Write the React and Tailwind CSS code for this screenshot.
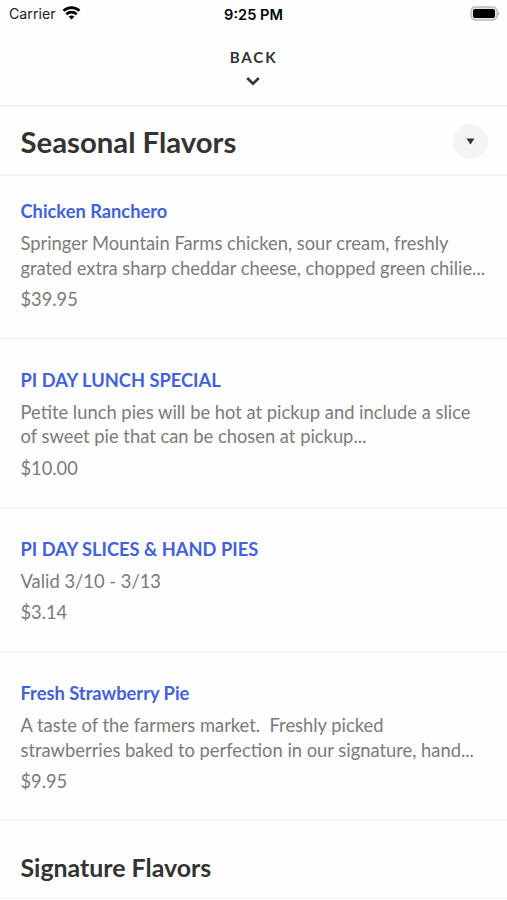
const seasonal = [
    {
        name : "Chicken Ranchero",
        lines : ["Springer Mountain Farms chicken, sour cream, freshly", "grated extra sharp cheddar cheese, chopped green chilie..."],
        price : "$39.95",
    },
    {
        name : "PI DAY LUNCH SPECIAL",
        lines : ["Petite lunch pies will be hot at pickup and include a slice", "of sweet pie that can be chosen at pickup..."],
        price : "$10.00",
    },
    {
        name : "PI DAY SLICES & HAND PIES",
        lines : ["Valid 3/10 - 3/13"],
        price : "$3.14",
    },
    {
        name : "Fresh Strawberry Pie",
        lines : ["A taste of the farmers market.  Freshly picked", "strawberries baked to perfection in our signature, hand..."],
        price : "$9.95",
    },
];

const StatusBar = () => {
    return(
        <div className="h-7 pl-[9px] pr-[7px] grid grid-cols-3 items-center font-['Inter',sans-serif] text-black">
            <div className="flex items-center gap-[6px] text-[14.2px]">
                <span className="text-[#222]">Carrier</span>
                <svg className="-mt-[2px]" width="19" height="14" viewBox="0 0 18 14" fill="none" stroke="#000" strokeWidth="2.6">
                    <path d="M1 4.8C5.5.6 12.5.6 17 4.8" />
                    <path d="M3.8 8.2C6.8 5.4 11.2 5.4 14.2 8.2" />
                    <path d="M6.2 10.7C7.8 9.2 10.2 9.2 11.8 10.7L9 13.6Z" fill="#000" stroke="none" />
                </svg>
            </div>
            <span className="pt-px pr-[2px] text-center text-[14.6px] leading-[22px] font-semibold whitespace-nowrap">9:25 PM</span>
            <svg className="justify-self-end -mt-[2px]" width="30" height="15" viewBox="0 0 30 15">
                <rect x="1" y="1" width="26" height="13" rx="4" fill="#e4e4e4" stroke="#bdbdbd" strokeWidth="1.4" />
                <rect x="3" y="3" width="22" height="9" rx="2" fill="#000" />
                <path d="M28 5C29.8 5.8 29.8 9.2 28 10Z" fill="#bdbdbd" />
            </svg>
        </div>
    )
}

const MenuItem = ({ item }) => {
    return(
        <li className="pl-[20.5px] pt-[27.9px] first:pt-[22px] pb-[26px] border-b border-[#f1f1f1]">
            <h3 className="text-[18.3px] leading-[26px] font-bold text-[#4361da]">{item.name}</h3>
            <div className="mt-[7px] text-[18.35px] leading-[24.5px] text-[#7b7b7b]">
                {item.lines.map((line) => (
                    <p key={line} className="whitespace-pre">{line}</p>
                ))}
            </div>
            <p className="mt-[7px] text-[18.3px] leading-[25px] text-[#7b7b7b]">{item.price}</p>
        </li>
    )
}

const App = () => {
    return(
        <div className="w-full h-[900px] overflow-hidden bg-[#fefefe] font-['Lato',sans-serif] text-[#333]">
            <StatusBar />
            <button className="w-full h-[79px] pt-5 pr-px flex flex-col items-center border-b-2 border-[#f4f4f4]">
                <span className="pl-px text-[15.2px] leading-[18px] font-bold tracking-[1.8px]">BACK</span>
                <svg className="mt-[10px]" width="14" height="10" viewBox="0 0 14 10" fill="none" stroke="#333" strokeWidth="2.6">
                    <path d="M1.2 2L7 7.7L12.8 2" />
                </svg>
            </button>
            <header className="h-[69px] pl-[20.5px] pr-[19px] pt-[2px] flex justify-between items-center border-b-2 border-[#f4f4f4]">
                <h1 className="text-[29.3px] font-bold">Seasonal Flavors</h1>
                <button className="size-[35px] rounded-full bg-[#f4f4f4] flex justify-center items-center">
                    <svg width="9" height="7" viewBox="0 0 9 7" fill="#333">
                        <path d="M0.5 0.5H8.5L4.5 6.5Z" />
                    </svg>
                </button>
            </header>
            <ul>
                {seasonal.map((item) => (
                    <MenuItem key={item.name} item={item} />
                ))}
            </ul>
            <h2 className="h-[78px] pl-[20.5px] pt-[30px] text-[24.9px] leading-[32px] font-bold border-b border-[#f1f1f1]">Signature Flavors</h2>
        </div>
    )
}

export default App;
